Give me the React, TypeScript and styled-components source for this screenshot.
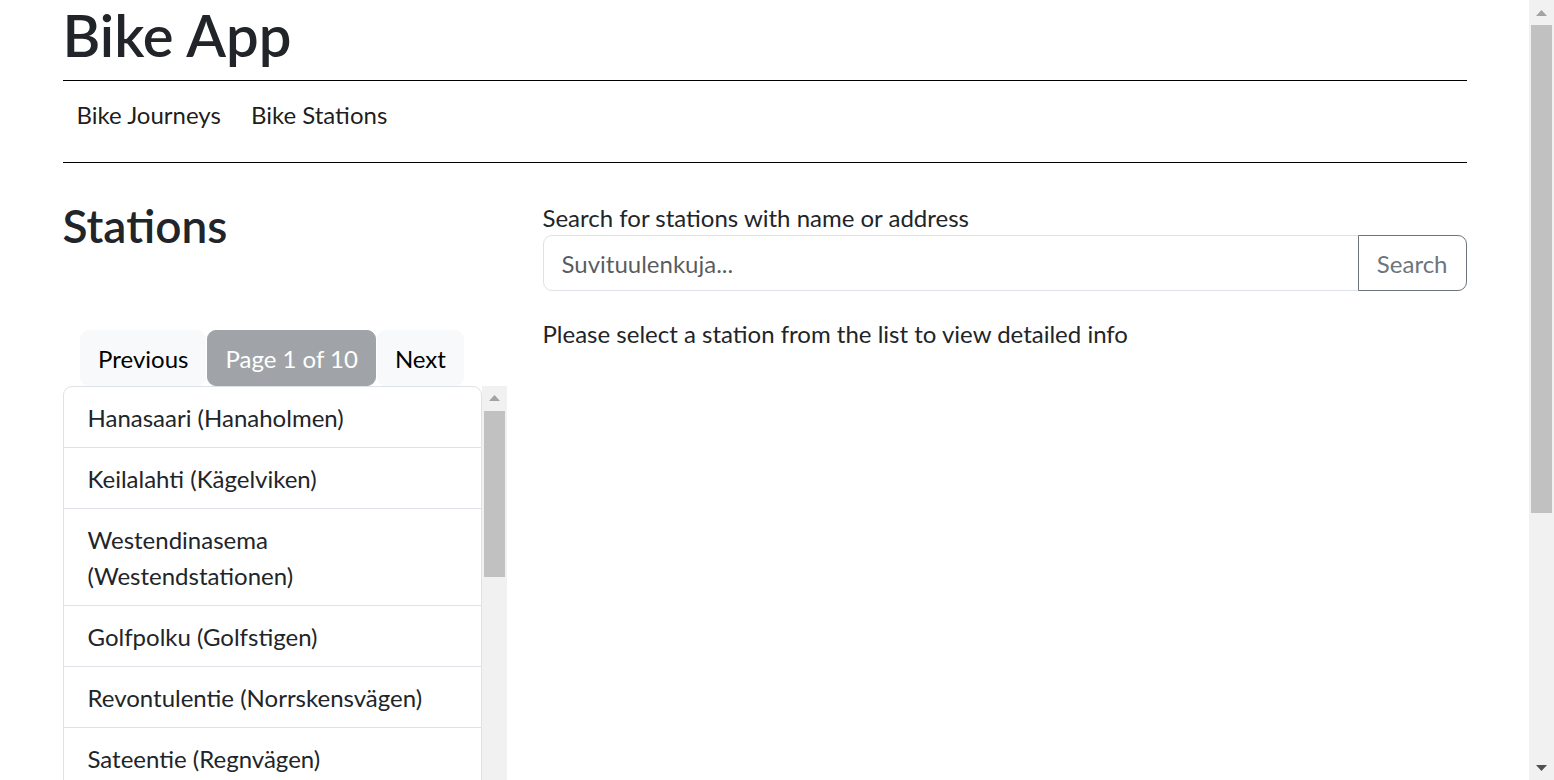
import React from "react";
import styled, { createGlobalStyle } from "styled-components";

const GlobalStyle = createGlobalStyle`
  html, body { overflow: hidden; }
  body {
    margin: 0;
    font-family: Lato, "Noto Sans", sans-serif;
    font-size: 24px;
    line-height: 1.5;
    color: #212529;
    background: #fff;
  }
  *, *::before, *::after { box-sizing: border-box; }
`;

const Viewport = styled.div`
  display: flex;
  height: 100vh;
`;

const Main = styled.main`
  flex: 1;
  min-width: 0;
  overflow-y: auto;
  scrollbar-width: none;
`;

const Rail = styled.div<{ $height?: string }>`
  flex: none;
  width: 25px;
  height: ${(p) => p.$height ?? "100%"};
  display: flex;
  flex-direction: column;
  background: #f1f1f1;
`;

const RailButton = styled.div<{ $size: number }>`
  flex: none;
  height: ${(p) => p.$size}px;
  display: flex;
  align-items: center;
  justify-content: center;
`;

const Thumb = styled.div<{ $size: number; $offset?: number }>`
  flex: none;
  height: ${(p) => p.$size}px;
  margin: ${(p) => p.$offset ?? 0}px 2px 0;
  background: #c1c1c1;
`;

const Track = styled.div`
  flex: 1;
`;

const Arrow = ({ dir, color }: { dir: "up" | "down"; color: string }) => (
  <svg width="11" height="6" viewBox="0 0 11 6" aria-hidden="true">
    <polygon points={dir === "up" ? "5.5,0 11,6 0,6" : "0,0 11,0 5.5,6"} fill={color} />
  </svg>
);

const Container = styled.div`
  max-width: 1440px;
  margin: 0 auto;
  padding: 0 18px 24px;
`;

const Title = styled.h1`
  margin: 0 0 12px;
  padding-top: 2px;
  font-size: 58px;
  line-height: 66px;
  font-weight: 600;
`;

const Rule = styled.hr`
  margin: 0;
  border: 0;
  border-top: 1px solid #000;
`;

const Nav = styled.nav`
  display: flex;
  gap: 30px;
  padding: 16px 0 29px 14px;
`;

const NavLink = styled.a`
  color: rgba(0, 0, 0, 0.9);
  text-decoration: none;
  line-height: 36px;
`;

const Row = styled.div`
  display: grid;
  grid-template-columns: 444px 1fr;
  column-gap: 36px;
  margin-top: 32px;
`;

const LeftCol = styled.div`
  display: flex;
  flex-direction: column;
`;

const RightCol = styled.div`
  display: flex;
  flex-direction: column;
  padding-top: 4px;
`;

const SectionTitle = styled.h2`
  margin: 0;
  padding-top: 1px;
  font-size: 46px;
  line-height: 59px;
  font-weight: 600;
`;

const Pager = styled.div`
  width: 419px;
  display: flex;
  justify-content: center;
  gap: 1px;
  margin-top: 75px;
`;

const PagerButton = styled.button<{ $active?: boolean }>`
  font: inherit;
  line-height: 36px;
  padding: 10px 17px 8px;
  border-radius: 9px;
  border: 1px solid ${(p) => (p.$active ? "#a0a4a8" : "#f8f9fa")};
  background: ${(p) => (p.$active ? "#a0a4a8" : "#f8f9fa")};
  color: ${(p) => (p.$active ? "#fff" : "#000")};
  cursor: pointer;
`;

const ListBox = styled.div`
  display: flex;
  width: 444px;
  height: 757px;
`;

const ListViewport = styled.div`
  width: 419px;
  height: 100%;
  overflow: hidden;
`;

const List = styled.ul`
  list-style: none;
  margin: 0;
  padding: 0;
`;

const ListItem = styled.li`
  padding: 13px 24px 11px;
  border: 1px solid #dee2e6;
  line-height: 36px;
  & + & { border-top-width: 0; }
  &:first-child { border-radius: 9px 9px 0 0; }
  &:last-child { border-radius: 0 0 9px 9px; }
`;

const Label = styled.label`
  display: block;
  padding-top: 1px;
  line-height: 35px;
`;

const InputGroup = styled.div`
  display: flex;
`;

const SearchInput = styled.input`
  flex: 1;
  min-width: 0;
  font: inherit;
  line-height: 36px;
  padding: 10px 18px 8px;
  border: 1px solid #dee2e6;
  border-radius: 9px 0 0 9px;
  color: #212529;
  outline: none;
  &::placeholder { color: rgba(33, 37, 41, 0.75); }
`;

const SearchButton = styled.button`
  font: inherit;
  line-height: 36px;
  padding: 10px 18px 8px;
  margin-left: -1px;
  border: 1px solid #6c757d;
  border-radius: 0 9px 9px 0;
  background: transparent;
  color: #6c757d;
  cursor: pointer;
`;

const Info = styled.p`
  margin: 25px 0 0;
  line-height: 36px;
`;

const stations = [
  "Hanasaari (Hanaholmen)",
  "Keilalahti (Kägelviken)",
  "Westendinasema (Westendstationen)",
  "Golfpolku (Golfstigen)",
  "Revontulentie (Norrskensvägen)",
  "Sateentie (Regnvägen)",
  "Hakalehto (Hagalund)",
  "Oravannahkatori (Ekorrskinnstorget)",
  "Länsituulenkuja (Västanvindsgränd)",
  "Suomenlahdentie (Finnviksvägen)",
  "Tiistinkallio (Distingsberget)",
  "Tapionaukio (Tapiolaplatsen)",
  "Kulttuuriaukio (Kulturplatsen)",
  "Ahertajantie (Flitiga vägen)",
  "Meritori (Havstorget)",
];

export default function App() {
  return (
    <>
      <GlobalStyle />
      <Viewport>
        <Main>
          <Container>
            <Title>Bike App</Title>
            <Rule />
            <Nav>
              <NavLink href="#">Bike Journeys</NavLink>
              <NavLink href="#">Bike Stations</NavLink>
            </Nav>
            <Rule />
            <Row>
              <LeftCol>
                <SectionTitle>Stations</SectionTitle>
                <Pager>
                  <PagerButton>Previous</PagerButton>
                  <PagerButton $active>Page 1 of 10</PagerButton>
                  <PagerButton>Next</PagerButton>
                </Pager>
                <ListBox>
                  <ListViewport>
                    <List>
                      {stations.map((s) => (
                        <ListItem key={s}>{s}</ListItem>
                      ))}
                    </List>
                  </ListViewport>
                  <Rail $height="100%">
                    <RailButton $size={24}>
                      <Arrow dir="up" color="#a3a3a3" />
                    </RailButton>
                    <Thumb $size={166} $offset={1} />
                    <Track />
                    <RailButton $size={24}>
                      <Arrow dir="down" color="#505050" />
                    </RailButton>
                  </Rail>
                </ListBox>
              </LeftCol>
              <RightCol>
                <Label htmlFor="search">Search for stations with name or address</Label>
                <InputGroup>
                  <SearchInput id="search" placeholder="Suvituulenkuja..." />
                  <SearchButton>Search</SearchButton>
                </InputGroup>
                <Info>Please select a station from the list to view detailed info</Info>
              </RightCol>
            </Row>
          </Container>
        </Main>
        <Rail>
          <RailButton $size={25}>
            <Arrow dir="up" color="#a3a3a3" />
          </RailButton>
          <Thumb $size={488} />
          <Track />
          <RailButton $size={25}>
            <Arrow dir="down" color="#505050" />
          </RailButton>
        </Rail>
      </Viewport>
    </>
  );
}
